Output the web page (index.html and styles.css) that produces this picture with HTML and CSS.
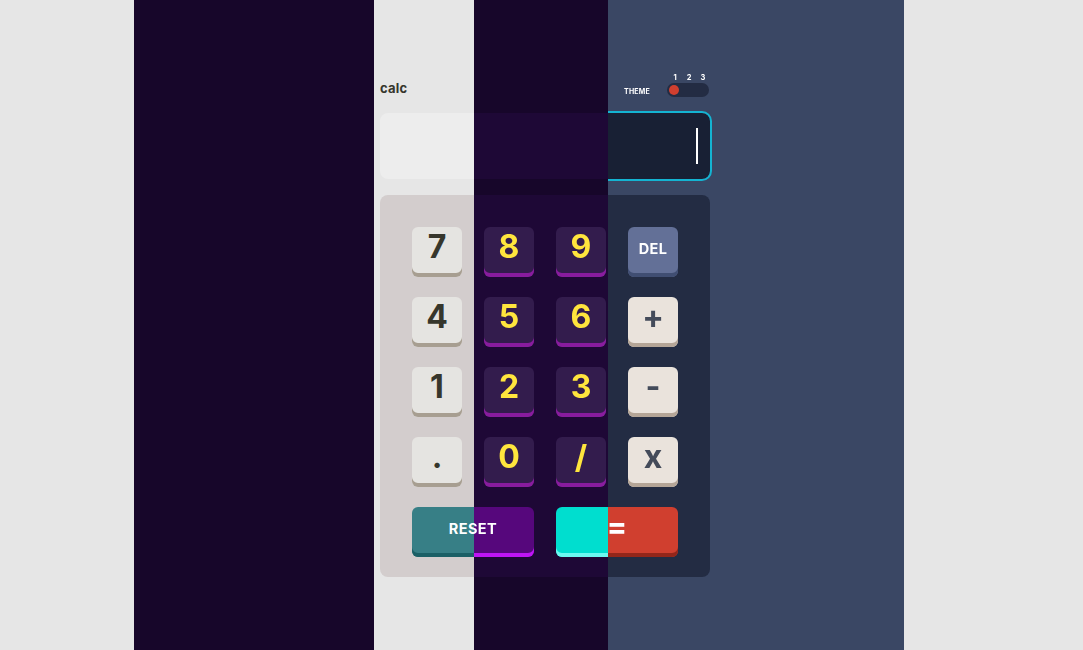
FILE: index.html
```html
<!DOCTYPE html>
<html lang="en">
<head>
<meta charset="utf-8">
<title>calc</title>
<link rel="stylesheet" href="styles.css">
</head>
<body>
<div class="stage">
  <div class="layer theme-1">
    <div class="calc">
      <header class="top">
        <span class="logo">calc</span>
        <div class="switcher">
          <span class="switch-label">THEME</span>
          <div class="switch-box">
            <div class="switch-nums"><span>1</span><span>2</span><span>3</span></div>
            <div class="switch-track"><span class="knob"></span></div>
          </div>
        </div>
      </header>
      <div class="screen"><span class="caret"></span></div>
      <div class="pad">
        <button class="key">7</button><button class="key">8</button><button class="key">9</button><button class="key alt">DEL</button>
        <button class="key">4</button><button class="key">5</button><button class="key">6</button><button class="key">+</button>
        <button class="key">1</button><button class="key">2</button><button class="key">3</button><button class="key">-</button>
        <button class="key">.</button><button class="key">0</button><button class="key">/</button><button class="key">x</button>
        <button class="key alt wide">RESET</button><button class="key eq wide">=</button>
      </div>
    </div>
  </div>
  <div class="layer theme-3">
    <div class="calc">
      <header class="top">
        <span class="logo">calc</span>
        <div class="switcher">
          <span class="switch-label">THEME</span>
          <div class="switch-box">
            <div class="switch-nums"><span>1</span><span>2</span><span>3</span></div>
            <div class="switch-track"><span class="knob"></span></div>
          </div>
        </div>
      </header>
      <div class="screen"><span class="caret"></span></div>
      <div class="pad">
        <button class="key">7</button><button class="key">8</button><button class="key">9</button><button class="key alt">DEL</button>
        <button class="key">4</button><button class="key">5</button><button class="key">6</button><button class="key">+</button>
        <button class="key">1</button><button class="key">2</button><button class="key">3</button><button class="key">-</button>
        <button class="key">.</button><button class="key">0</button><button class="key">/</button><button class="key">x</button>
        <button class="key alt wide">RESET</button><button class="key eq wide">=</button>
      </div>
    </div>
  </div>
  <div class="layer theme-2">
    <div class="calc">
      <header class="top">
        <span class="logo">calc</span>
        <div class="switcher">
          <span class="switch-label">THEME</span>
          <div class="switch-box">
            <div class="switch-nums"><span>1</span><span>2</span><span>3</span></div>
            <div class="switch-track"><span class="knob"></span></div>
          </div>
        </div>
      </header>
      <div class="screen focus"><span class="caret"></span></div>
      <div class="pad">
        <button class="key">7</button><button class="key">8</button><button class="key">9</button><button class="key alt">DEL</button>
        <button class="key">4</button><button class="key">5</button><button class="key">6</button><button class="key">+</button>
        <button class="key">1</button><button class="key">2</button><button class="key">3</button><button class="key">-</button>
        <button class="key">.</button><button class="key">0</button><button class="key">/</button><button class="key">x</button>
        <button class="key alt wide">RESET</button><button class="key eq wide">=</button>
      </div>
    </div>
  </div>
</div>
</body>
</html>
```
FILE: styles.css
```css
* { box-sizing: border-box; }
html, body { margin: 0; padding: 0; }
body {
  font-family: "Inter", "Liberation Sans", sans-serif;
  background: #e6e6e6;
}
.stage {
  position: relative;
  width: 1083px;
  height: 650px;
  overflow: hidden;
}
.layer {
  position: absolute;
  inset: 0;
  background: var(--bg);
}
.theme-3 {
  -webkit-mask-image: linear-gradient(to right, transparent 0, transparent 134px, #000 134px, #000 374px, transparent 374px, transparent 474px, #000 474px, #000 608px, transparent 608px);
  mask-image: linear-gradient(to right, transparent 0, transparent 134px, #000 134px, #000 374px, transparent 374px, transparent 474px, #000 474px, #000 608px, transparent 608px);
}
.theme-2 {
  -webkit-mask-image: linear-gradient(to right, transparent 0, transparent 608px, #000 608px, #000 904px, transparent 904px);
  mask-image: linear-gradient(to right, transparent 0, transparent 608px, #000 608px, #000 904px, transparent 904px);
}

/* theme palettes */
.theme-1 {
  --bg: #e6e6e6; --screen: #ededed; --pad: #d3cdcd; --text: #36362c;
  --key: #e5e4e1; --key-sh: #a79e91; --key-tx: #36362c;
  --alt: #377f86; --alt-sh: #1b6066; --alt-tx: #ffffff;
  --eq: #c85402; --eq-sh: #873901; --eq-tx: #ffffff;
  --track: #d3cdcd; --knob: #c85402; --head: #36362c;
}
.theme-2 {
  --bg: #3a4764; --screen: #182034; --pad: #232c43; --text: #ffffff;
  --key: #eae3dc; --key-sh: #b4a597; --key-tx: #444b5a;
  --alt: #637097; --alt-sh: #404e72; --alt-tx: #ffffff;
  --eq: #d03f2f; --eq-sh: #93261a; --eq-tx: #ffffff;
  --track: #232c43; --knob: #d03f2f; --head: #ffffff;
}
.theme-3 {
  --bg: #17062a; --screen: #1e0836; --pad: #1e0836; --text: #ffe53d;
  --key: #331c4d; --key-sh: #881c9e; --key-tx: #ffe53d;
  --alt: #56077c; --alt-sh: #be15f4; --alt-tx: #ffffff;
  --eq: #00decf; --eq-sh: #6cf9f1; --eq-tx: #00decf;
  --track: #1e0836; --knob: #00decf; --head: #ffe53d;
}

.calc {
  width: 330px;
  margin: 73px 0 0 380px;
  display: flex;
  flex-direction: column;
}
.top {
  height: 24px;
  display: flex;
  justify-content: space-between;
  align-items: flex-end;
  color: var(--head);
}
.logo {
  font-size: 13px;
  line-height: 13px;
  font-weight: 700;
  padding-bottom: 2px;
  letter-spacing: 0.2px;
}
.switcher {
  display: flex;
  align-items: flex-end;
  gap: 17px;
}
.switch-label {
  font-size: 7px;
  line-height: 8px;
  font-weight: 700;
  letter-spacing: 0.2px;
  padding-bottom: 1px;
}
.switch-box {
  display: flex;
  flex-direction: column;
  gap: 1px;
}
.switch-nums {
  display: flex;
  height: 9px;
  padding: 0 0 0 1px;
}
.switch-nums span {
  width: 14px;
  text-align: center;
  font-size: 7.5px;
  line-height: 9px;
  font-weight: 700;
}
.switch-track {
  width: 42px;
  height: 14px;
  border-radius: 7px;
  background: var(--track);
  display: flex;
  align-items: center;
  padding-left: 2px;
}
.knob {
  width: 10px;
  height: 10px;
  border-radius: 50%;
  background: var(--knob);
}

.screen {
  margin-top: 16px;
  height: 66px;
  border-radius: 8px;
  background: var(--screen);
  display: flex;
  align-items: center;
  justify-content: flex-end;
  padding-right: 12px;
}
.screen.focus {
  outline: 2px solid #14b4d2;
}
.caret {
  width: 2px;
  height: 36px;
  background: var(--text);
}
.theme-1 .caret, .theme-3 .caret { background: transparent; }

.pad {
  margin-top: 16px;
  border-radius: 8px;
  background: var(--pad);
  padding: 32px 32px 20px 32px;
  display: grid;
  grid-template-columns: 50px 50px 50px 50px;
  grid-auto-rows: 50px;
  justify-content: space-between;
  row-gap: 20px;
}
.key {
  border: 0;
  margin: 0;
  padding: 0 0 11px 0;
  border-radius: 6px;
  background: var(--key);
  box-shadow: inset 0 -4px 0 var(--key-sh);
  color: var(--key-tx);
  font-family: inherit;
  font-size: 32px;
  font-weight: 700;
  line-height: 1;
  display: flex;
  align-items: center;
  justify-content: center;
}
.key.alt {
  background: var(--alt);
  box-shadow: inset 0 -4px 0 var(--alt-sh);
  color: var(--alt-tx);
  font-size: 14.5px;
  letter-spacing: 0.4px;
  padding-bottom: 6px;
}
.key.eq {
  background: var(--eq);
  box-shadow: inset 0 -4px 0 var(--eq-sh);
  color: var(--eq-tx);
  font-size: 30px;
  padding-bottom: 12px;
}
.key.wide { grid-column: span 2; }
```
